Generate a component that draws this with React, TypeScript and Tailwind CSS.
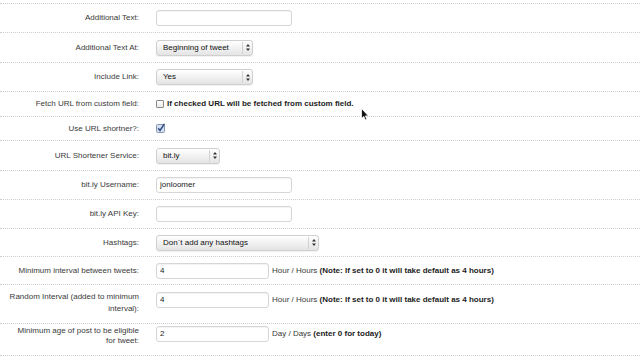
import React from 'react';

const TextInput: React.FC<{ value?: string; w?: string }> = ({ value = '', w = 'w-[136px]' }) => (
  <div
    className={`${w} flex h-[16px] items-center rounded-[3px] border border-[#d6d6d6] bg-white pl-[3px] text-[8px] text-[#222] shadow-[inset_0_1px_1px_rgba(0,0,0,0.05)]`}
  >
    {value}
  </div>
);

const Select: React.FC<{ value: string; w: string }> = ({ value, w }) => (
  <div
    className={`${w} flex h-[16px] items-center rounded-[3px] border border-[#cfcfcf] bg-linear-to-b from-white to-[#e4e4e4] shadow-[0_1px_1px_rgba(0,0,0,0.06)]`}
  >
    <span className="flex-1 truncate pl-[6px] text-[8px] text-[#111]">{value}</span>
    <span className="flex h-[12px] w-[10px] items-center justify-center border-l border-[#d2d2d2]">
      <svg width="4" height="7" viewBox="0 0 4 7">
        <path d="M2 0 L4 2.6 H0 Z M0 4.4 H4 L2 7 Z" fill="#333" />
      </svg>
    </span>
  </div>
);

const Checkbox: React.FC<{ checked?: boolean }> = ({ checked }) =>
  checked ? (
    <svg width="10" height="10" viewBox="0 0 10 10" className="-mt-[2px]">
      <rect x="0.5" y="1.5" width="8" height="8" rx="1" fill="#d6e0f0" stroke="#8796b3" />
      <path d="M2.2 5.2 L4 7.4 L8.4 0.8" fill="none" stroke="#2f4a7e" strokeWidth="1.5" />
    </svg>
  ) : (
    <span className="block h-[8px] w-[8px] rounded-[1px] border border-[#8a8a8a] bg-linear-to-b from-white to-[#eaeaea]" />
  );

type RowProps = {
  label: React.ReactNode;
  h: string;
  labelCls?: string;
  ctlCls?: string;
  children: React.ReactNode;
};

// rows with labelCls set hold a two-line label, so they align to the top
const Row: React.FC<RowProps> = ({ label, h, labelCls, ctlCls, children }) => (
  <div
    className={`${h} flex border-b border-dotted border-[#cdcdcd] ${labelCls ? 'items-start' : 'items-center'}`}
  >
    <div
      className={`w-[139px] shrink-0 whitespace-nowrap text-right text-[8px] text-[#3a3a3a] ${labelCls ?? 'leading-[12px]'}`}
    >
      {label}
    </div>
    <div className={`ml-[17px] flex items-center ${ctlCls ?? ''}`}>{children}</div>
  </div>
);

export default function App() {
  return (
    <div className="relative h-[360px] w-[640px] overflow-hidden bg-white font-['Liberation_Sans',Arial,sans-serif]">
      <div className="h-[4px] border-b border-dotted border-[#cdcdcd]" />

      <Row label="Additional Text:" h="h-[29px]">
        <TextInput />
      </Row>
      <Row label="Additional Text At:" h="h-[30px]">
        <Select value="Beginning of tweet" w="w-[97px]" />
      </Row>
      <Row label="Include Link:" h="h-[29px]">
        <Select value="Yes" w="w-[97px]" />
      </Row>
      <Row label="Fetch URL from custom field:" h="h-[25px]">
        <Checkbox />
        <span className="ml-[3px] text-[8px] font-bold text-[#1c1c1c]">
          If checked URL will be fetched from custom field.
        </span>
      </Row>
      <Row label="Use URL shortner?:" h="h-[24px]">
        <Checkbox checked />
      </Row>
      <Row label="URL Shortener Service:" h="h-[30px]">
        <Select value="bit.ly" w="w-[64px]" />
      </Row>
      <Row label="bit.ly Username:" h="h-[29px]">
        <TextInput value="jonloomer" />
      </Row>
      <Row label="bit.ly API Key:" h="h-[29px]">
        <TextInput />
      </Row>
      <Row label="Hashtags:" h="h-[28px]">
        <Select value="Don`t add any hashtags" w="w-[163px]" />
      </Row>
      <Row label="Minimum interval between tweets:" h="h-[28px]">
        <TextInput value="4" w="w-[113px]" />
        <span className="ml-[3px] text-[8px] text-[#3a3a3a]">
          Hour / Hours <b className="text-[#1c1c1c]">(Note: If set to 0 it will take default as 4 hours)</b>
        </span>
      </Row>
      <Row
        label={
          <>
            Random Interval (added to minimum
            <br />
            interval):
          </>
        }
        h="h-[39px]"
        labelCls="pt-[6px] leading-[12px]"
        ctlCls="pt-[7px]"
      >
        <TextInput value="4" w="w-[113px]" />
        <span className="ml-[3px] text-[8px] text-[#3a3a3a]">
          Hour / Hours <b className="text-[#1c1c1c]">(Note: If set to 0 it will take default as 4 hours)</b>
        </span>
      </Row>
      <Row
        label={
          <>
            Minimum age of post to be eligible
            <br />
            for tweet:
          </>
        }
        h="h-[32px]"
        labelCls="pt-[2px] leading-[10px]"
        ctlCls="pt-[2px]"
      >
        <TextInput value="2" w="w-[113px]" />
        <span className="ml-[3px] text-[8px] text-[#3a3a3a]">
          Day / Days <b className="text-[#1c1c1c]">(enter 0 for today)</b>
        </span>
      </Row>

      {/* mouse pointer */}
      <svg className="absolute left-[361px] top-[108px]" width="8" height="13" viewBox="0 0 8 13">
        <path
          d="M0.5 0.5 L0.5 10.5 L2.8 8.4 L4.4 12 L5.9 11.3 L4.4 7.9 L7.4 7.9 Z"
          fill="#111"
          stroke="#fff"
          strokeWidth="0.8"
        />
      </svg>
    </div>
  );
}
